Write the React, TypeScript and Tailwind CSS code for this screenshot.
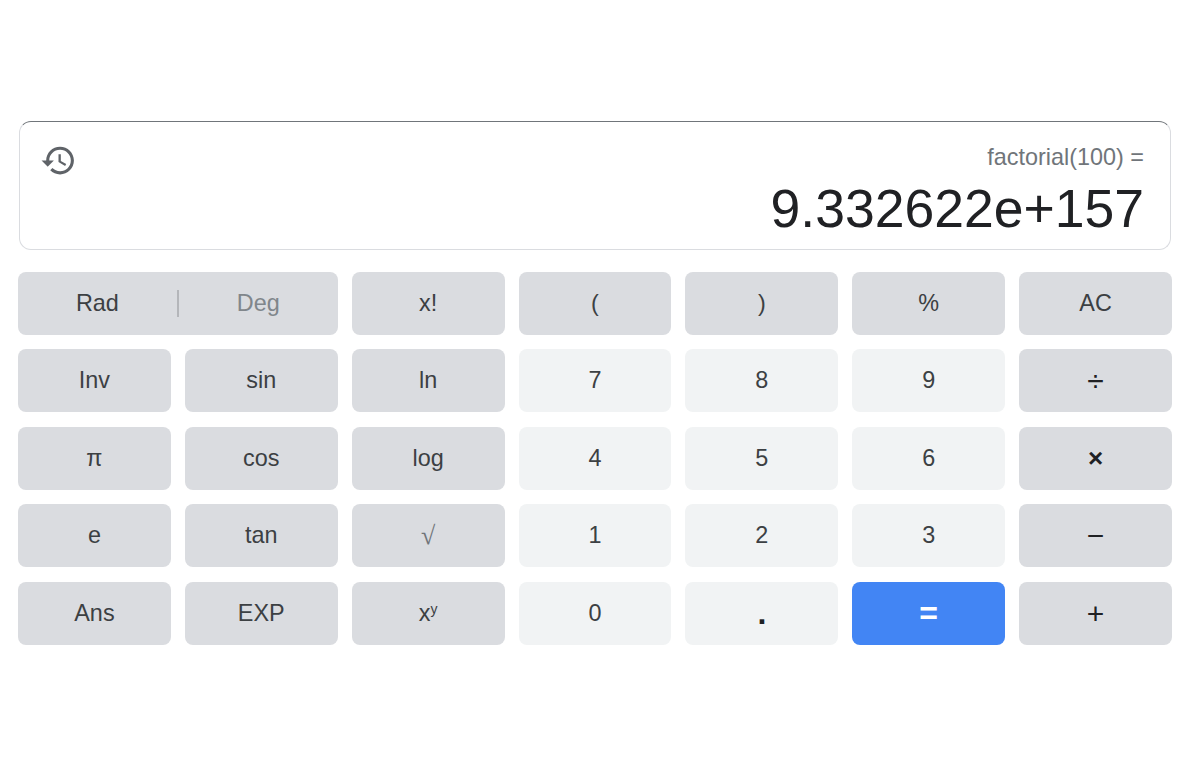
const dark = "bg-[#dadce0] text-[#3c4043]";
const light = "bg-[#f1f3f4] text-[#3c4043]";
const operator = "bg-[#dadce0] text-[#202124] text-[30px]";

const keys = [
  { label: "x!", style: dark },
  { label: "(", style: dark },
  { label: ")", style: dark },
  { label: "%", style: dark },
  { label: "AC", style: dark },
  { label: "Inv", style: dark },
  { label: "sin", style: dark },
  { label: "ln", style: dark },
  { label: "7", style: light },
  { label: "8", style: light },
  { label: "9", style: light },
  { label: "÷", style: operator },
  { label: "π", style: dark },
  { label: "cos", style: dark },
  { label: "log", style: dark },
  { label: "4", style: light },
  { label: "5", style: light },
  { label: "6", style: light },
  { label: "×", style: "bg-[#dadce0] text-[#202124] text-[26px] font-bold" },
  { label: "e", style: dark },
  { label: "tan", style: dark },
  { label: "√", style: "bg-[#dadce0] text-[#70757a] text-[26px] font-['Liberation_Serif',serif]" },
  { label: "1", style: light },
  { label: "2", style: light },
  { label: "3", style: light },
  { label: "−", style: operator },
  { label: "Ans", style: dark },
  { label: "EXP", style: dark },
  { label: "xy", style: dark },
  { label: "0", style: light },
  { label: ".", style: "bg-[#f1f3f4] text-[#202124] text-[32px] font-bold" },
  { label: "=", style: "bg-[#4285f4] text-white text-[32px] font-bold" },
  { label: "+", style: operator },
];

function Key({ label, style }: { label: string; style: string }) {
  return (
    <button className={`flex items-center justify-center rounded-lg ${style}`}>
      {label === "xy" ? (
        <span>
          x<sup className="text-[14px]">y</sup>
        </span>
      ) : (
        label
      )}
    </button>
  );
}

export default function App() {
  return (
    <main className="h-[768px] bg-white pt-[121px] pl-[18px] pr-[28px] font-['Liberation_Sans',Arial,sans-serif]">
      {/* DISPLAY */}
      <section className="ml-px mr-px h-[129px] rounded-xl border border-[#dadce0] border-t-[#70757a] pl-[26px] pr-[26px] pt-[22px] flex justify-between">
        <svg viewBox="0 0 24 24" className="w-[37px] h-[37px] -ml-[6px] -mt-[2px] fill-[#5f6368]">
          <path d="M13 3c-4.97 0-9 4.03-9 9H1l3.89 3.89.07.14L9 12H6c0-3.87 3.13-7 7-7s7 3.13 7 7-3.13 7-7 7c-1.93 0-3.68-.79-4.94-2.06l-1.42 1.42C8.27 19.99 10.51 21 13 21c4.97 0 9-4.03 9-9s-4.03-9-9-9zm-1 5v5l4.28 2.54.72-1.21-3.5-2.08V8H12z" />
        </svg>
        <div className="text-right">
          <p className="text-[23.4px] leading-[27px] text-[#70757a]">factorial(100) =</p>
          <p className="mt-[6px] text-[53.5px] leading-[64px] text-[#202124]">9.332622e+157</p>
        </div>
      </section>

      {/* KEYPAD */}
      <section className="mt-[21.9px] grid grid-cols-7 gap-x-[14px] gap-y-[14.5px] auto-rows-[63px] text-[23.4px]">
        <div className={`col-span-2 flex items-center rounded-lg ${dark}`}>
          <span className="flex-1 text-center">Rad</span>
          <span className="h-[27px] w-[2px] bg-[#b4b6ba]" />
          <span className="flex-1 text-center text-[#80868b]">Deg</span>
        </div>
        {keys.map((key) => (
          <Key key={key.label} label={key.label} style={key.style} />
        ))}
      </section>
    </main>
  );
}
